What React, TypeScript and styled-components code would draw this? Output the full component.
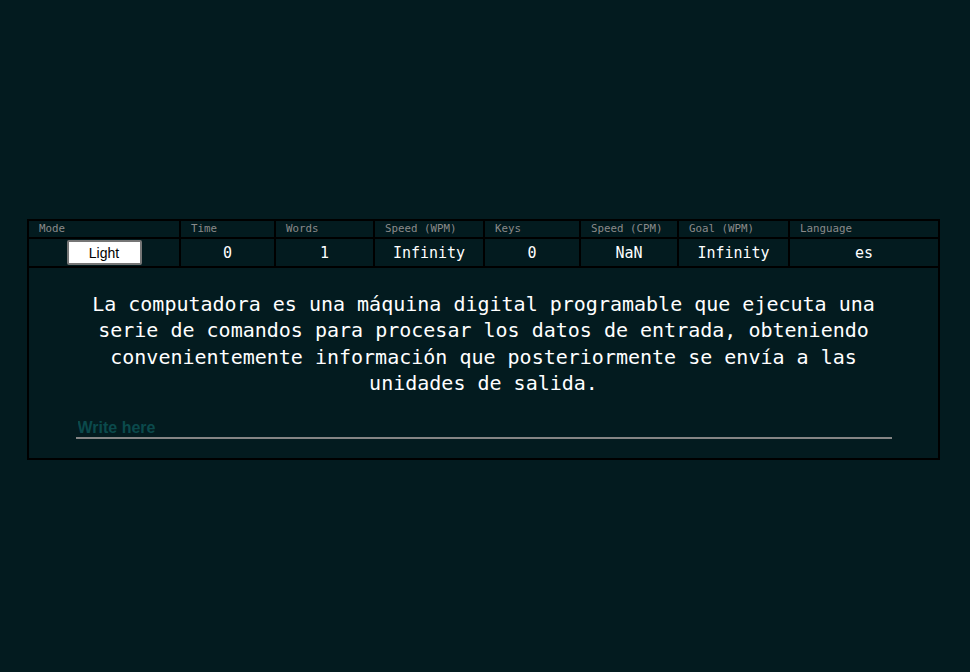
import React from "react";
import styled, { createGlobalStyle } from "styled-components";

const bg = "#031b1f";

const GlobalStyle = createGlobalStyle`
  html, body {
    margin: 0;
    padding: 0;
    background: ${bg};
  }
  body {
    font-family: "DejaVu Sans Mono", monospace;
  }
`;

const Page = styled.div`
  min-height: 672px;
  box-sizing: border-box;
  padding: 219px 0 0 27px;
`;

const Board = styled.div`
  display: grid;
  width: 913px;
  box-sizing: border-box;
  grid-template-columns: 150px 93px 97px 108px 94px 96px 109px 148px;
  grid-template-rows: 16px 27px 190px;
  gap: 2px;
  background: #000;
  border: 2px solid #000;
`;

const HeadCell = styled.div`
  background: ${bg};
  color: #8a8a8a;
  font-family: "DejaVu Sans Mono", monospace;
  font-size: 10.8px;
  line-height: 16px;
  padding-left: 10px;
  white-space: nowrap;
  overflow: hidden;
`;

const ValueCell = styled.div`
  background: ${bg};
  color: #ffffff;
  font-family: "DejaVu Sans Mono", monospace;
  font-size: 15px;
  display: flex;
  align-items: center;
  justify-content: center;
`;

const ModeButton = styled.button`
  width: 75px;
  height: 25px;
  box-sizing: border-box;
  background: #ffffff;
  border: 2px solid #767676;
  border-radius: 2px;
  color: #000;
  font-family: "Liberation Sans", Arial, sans-serif;
  font-size: 14px;
  padding: 0;
  cursor: pointer;
`;

const BodyCell = styled.div`
  grid-column: 1 / -1;
  background: ${bg};
  display: flex;
  flex-direction: column;
  align-items: center;
  padding: 23px 0 0;
`;

const Passage = styled.p`
  width: 90%;
  margin: 0 0 22px;
  color: #ffffff;
  font-family: "DejaVu Sans Mono", monospace;
  font-size: 20px;
  line-height: 26.3px;
  text-align: center;
`;

const TypeInput = styled.input`
  width: 816px;
  height: 21px;
  box-sizing: border-box;
  background: transparent;
  border: none;
  border-bottom: 2px solid #858585;
  outline: none;
  padding: 0 2px;
  color: #ffffff;
  font-family: "Liberation Sans", Arial, sans-serif;
  font-weight: bold;
  font-size: 16px;
  &::placeholder {
    color: #0b4a4c;
    opacity: 1;
  }
`;

const headers = [
  "Mode",
  "Time",
  "Words",
  "Speed (WPM)",
  "Keys",
  "Speed (CPM)",
  "Goal (WPM)",
  "Language",
];

const values = ["0", "1", "Infinity", "0", "NaN", "Infinity", "es"];

export default function App() {
  return (
    <>
      <GlobalStyle />
      <Page>
        <Board>
          {headers.map((h) => (
            <HeadCell key={h}>{h}</HeadCell>
          ))}
          <ValueCell>
            <ModeButton>Light</ModeButton>
          </ValueCell>
          {values.map((v, i) => (
            <ValueCell key={i}>{v}</ValueCell>
          ))}
          <BodyCell>
            <Passage>
              La computadora es una máquina digital programable que ejecuta una
              serie de comandos para procesar los datos de entrada, obteniendo
              convenientemente información que posteriormente se envía a las
              unidades de salida.
            </Passage>
            <TypeInput placeholder="Write here" />
          </BodyCell>
        </Board>
      </Page>
    </>
  );
}
